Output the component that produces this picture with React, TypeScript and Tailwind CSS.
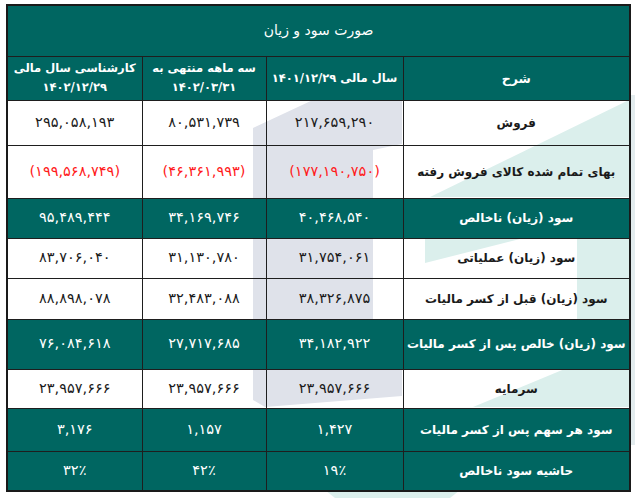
import React from 'react';

type Row = {
  label: string;
  values: [string, string, string];
  h: string;
  dark?: boolean;
  negative?: boolean;
};

const rows: Row[] = [
  { label: 'فروش', values: ['۲۱۷,۶۵۹,۲۹۰', '۸۰,۵۳۱,۷۳۹', '۲۹۵,۰۵۸,۱۹۳'], h: 'h-[45px]' },
  { label: 'بهای تمام شده کالای فروش رفته', values: ['(۱۷۷,۱۹۰,۷۵۰)', '(۴۶,۳۶۱,۹۹۳)', '(۱۹۹,۵۶۸,۷۴۹)'], h: 'h-[53px]', negative: true },
  { label: 'سود (زیان) ناخالص', values: ['۴۰,۴۶۸,۵۴۰', '۳۴,۱۶۹,۷۴۶', '۹۵,۴۸۹,۴۴۴'], h: 'h-[40px]', dark: true },
  { label: 'سود (زیان) عملیاتی', values: ['۳۱,۷۵۴,۰۶۱', '۳۱,۱۳۰,۷۸۰', '۸۳,۷۰۶,۰۴۰'], h: 'h-[40px]' },
  { label: 'سود (زیان) قبل از کسر مالیات', values: ['۳۸,۳۲۶,۸۷۵', '۳۲,۴۸۳,۰۸۸', '۸۸,۸۹۸,۰۷۸'], h: 'h-[41px]' },
  { label: 'سود (زیان) خالص پس از کسر مالیات', values: ['۳۴,۱۸۲,۹۲۲', '۲۷,۷۱۷,۶۸۵', '۷۶,۰۸۴,۶۱۸'], h: 'h-[50px]', dark: true },
  { label: 'سرمایه', values: ['۲۳,۹۵۷,۶۶۶', '۲۳,۹۵۷,۶۶۶', '۲۳,۹۵۷,۶۶۶'], h: 'h-[39px]' },
  { label: 'سود هر سهم پس از کسر مالیات', values: ['۱,۴۲۷', '۱,۱۵۷', '۳,۱۷۶'], h: 'h-[43px]', dark: true },
  { label: 'حاشیه سود ناخالص', values: ['۱۹٪', '۴۲٪', '۳۲٪'], h: 'h-[40px]', dark: true },
];

// faint logo watermark behind the table
const Watermark = () => (
  <svg className="absolute inset-0" width="635" height="498" viewBox="0 0 635 498">
    <polygon fill="#dfe2ea" points="253,128 315,99 402,99 402,144 373,150 373,368 402,368 402,396 265,407 253,400" />
    <polygon fill="#dbefec" points="430,197 629,100 629,197" />
    <polygon fill="#dbefec" points="425,237 528,237 425,263" />
    <polygon fill="#dbefec" points="577,237 629,237 629,368 577,368" />
    <polygon fill="#dbefec" points="473,407 567,368 629,368 629,407" />
    <polygon fill="#dbefec" points="325,490 460,490 450,498 335,498" />
    <rect fill="#e3ecee" x="630" y="95" width="5" height="350" />
  </svg>
);

export default function App() {
  const cell = 'border border-[#1e1e1e] text-center align-middle whitespace-nowrap';
  return (
    <div className="relative w-[635px] h-[498px] bg-white font-['DejaVu_Sans',sans-serif]">
      <Watermark />
      <div className="relative pt-[4px] pl-[6px]">
        <table dir="rtl" className="w-[623px] table-fixed border-collapse border-2 border-[#1a1a1a]">
          <colgroup>
            <col className="w-[227px]" />
            <col className="w-[137px]" />
            <col className="w-[124px]" />
            <col className="w-[135px]" />
          </colgroup>
          <thead>
            <tr className="h-[51px] bg-[#006661]">
              <th colSpan={4} className={`${cell} text-[14px] font-normal text-white`}>صورت سود و زیان</th>
            </tr>
            <tr className="h-[44px] bg-[#006661] text-white text-[11.5px] font-bold leading-[19px]">
              <th className={`${cell} text-[12.5px]`}>شرح</th>
              <th className={cell}>سال مالی ۱۴۰۱/۱۲/۲۹</th>
              <th className={cell}>
                سه ماهه منتهی به
                <br />
                ۱۴۰۲/۰۳/۳۱
              </th>
              <th className={cell}>
                کارشناسی سال مالی
                <br />
                ۱۴۰۲/۱۲/۲۹
              </th>
            </tr>
          </thead>
          <tbody>
            {rows.map((r) => (
              <tr key={r.label} className={`${r.h} ${r.dark ? 'bg-[#006661] text-white' : 'text-[#1a1a1a]'}`}>
                <td className={`${cell} text-[12px] font-bold`}>{r.label}</td>
                {r.values.map((v, i) => (
                  <td
                    key={i}
                    dir="ltr"
                    className={`${cell} text-[14.5px] ${r.negative ? 'text-[#ff1a1a]' : ''}`}
                  >
                    {v}
                  </td>
                ))}
              </tr>
            ))}
          </tbody>
        </table>
      </div>
    </div>
  );
}
